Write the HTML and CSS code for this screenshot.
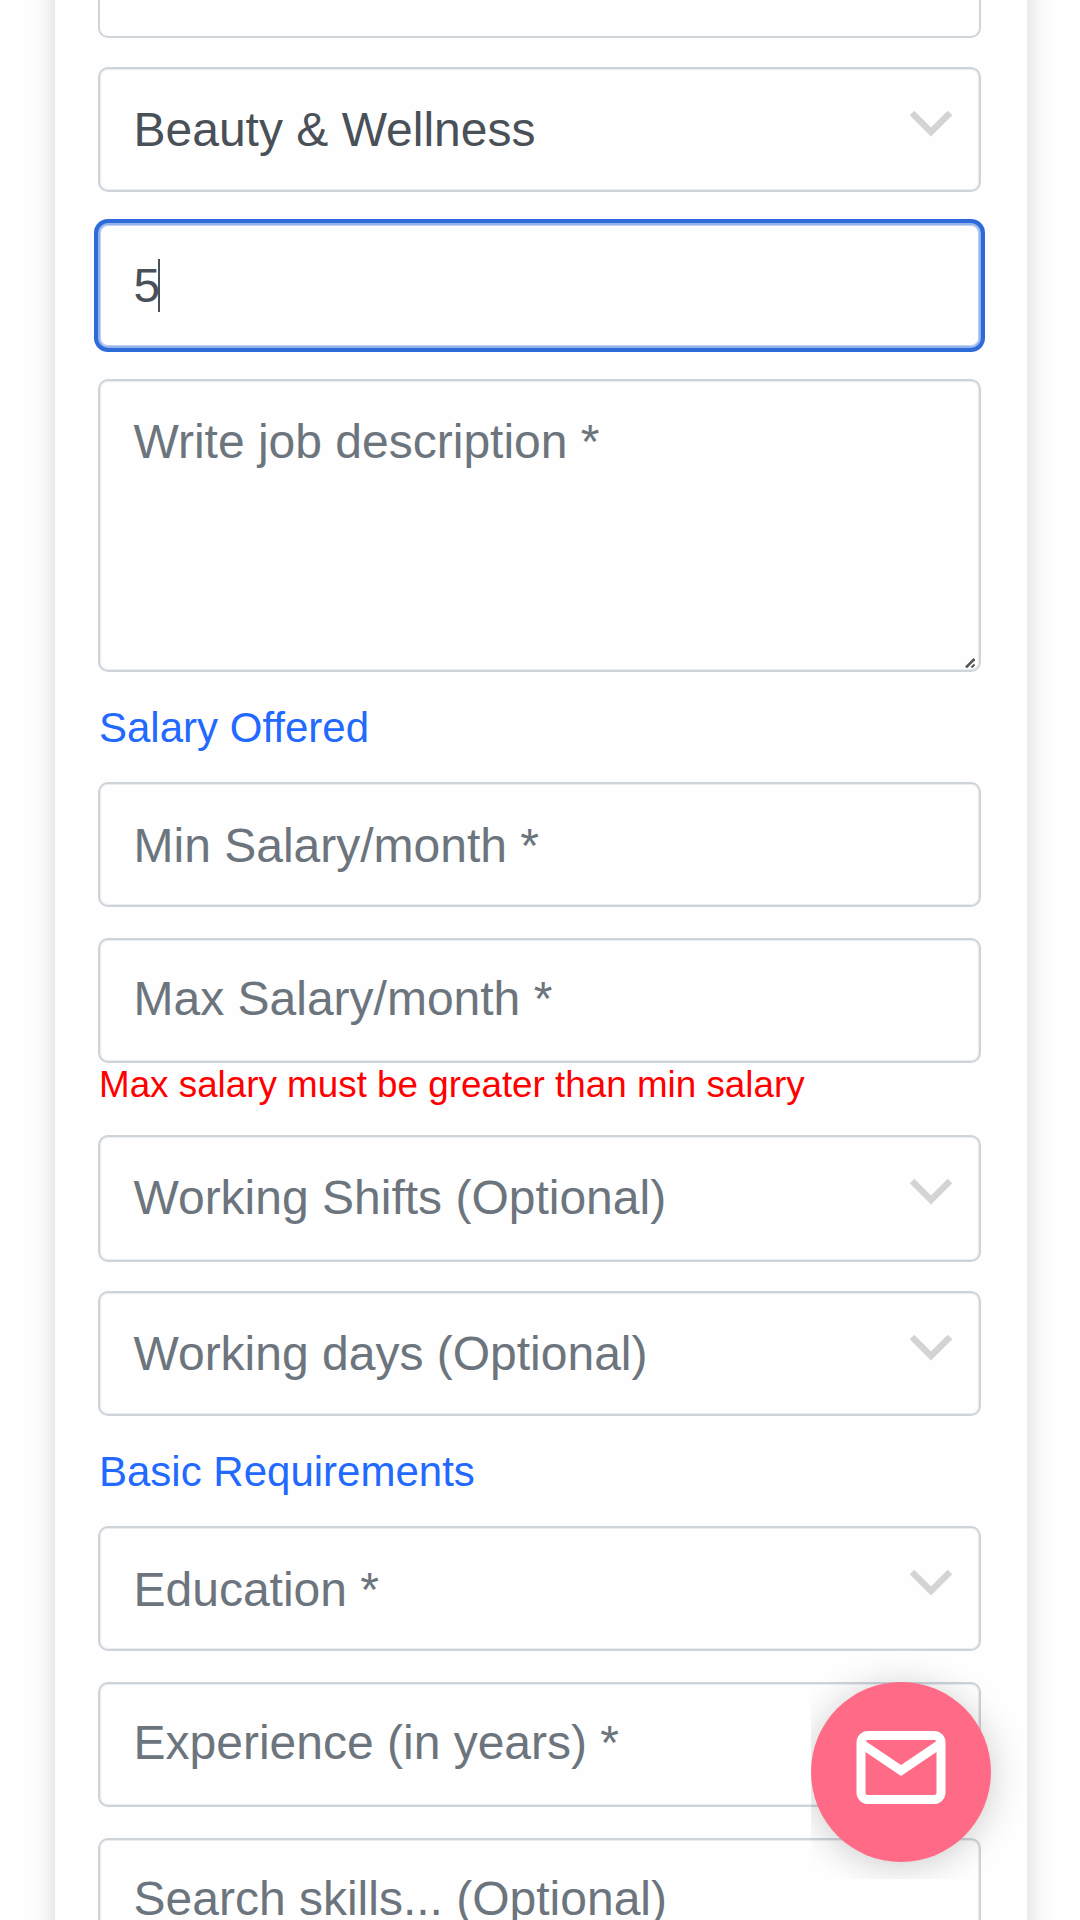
FILE: index.html
```html
<!DOCTYPE html>
<html lang="en">
<head>
<meta charset="utf-8">
<title>Post a job</title>
<link rel="stylesheet" href="styles.css">
</head>
<body>
<svg class="defs" width="0" height="0" aria-hidden="true">
  <symbol id="chevron" viewBox="0 0 44 28"><path d="M3 4 L22 23 L41 4" fill="none" stroke="#d4d4d4" stroke-width="6.4" stroke-linejoin="miter"/></symbol>
</svg>
<main class="card">
  <div class="field field-cut"></div>
  <div class="field filled"><span class="label">Beauty &amp; Wellness</span><svg class="chevron"><use href="#chevron"/></svg></div>
  <div class="field filled focused"><span class="label">5</span><span class="caret"></span></div>
  <div class="field area"><span class="label">Write job description *</span>
    <svg class="grip" viewBox="0 0 10 10"><path d="M1 9.500 L9.500 1" stroke="#555" stroke-width="2.600" fill="none"/><path d="M6.500 9.500 L9.500 6.500" stroke="#555" stroke-width="2" fill="none"/></svg>
  </div>
  <h2 class="heading">Salary Offered</h2>
  <div class="field lowered"><span class="label">Min Salary/month *</span></div>
  <div class="field raised"><span class="label">Max Salary/month *</span></div>
  <p class="error">Max salary must be greater than min salary</p>
  <div class="field tall"><span class="label">Working Shifts (Optional)</span><svg class="chevron"><use href="#chevron"/></svg></div>
  <div class="field last"><span class="label">Working days (Optional)</span><svg class="chevron"><use href="#chevron"/></svg></div>
  <h2 class="heading">Basic Requirements</h2>
  <div class="field lowered"><span class="label">Education *</span><svg class="chevron"><use href="#chevron"/></svg></div>
  <div class="field raised"><span class="label">Experience (in years) *</span></div>
  <div class="field raised"><span class="label">Search skills... (Optional)</span></div>
</main>
<div class="chat">
  <div class="bubble">
    <svg class="mail" viewBox="0 0 90 74"><rect x="5" y="4.500" width="80" height="64" rx="7" fill="none" stroke="#fff" stroke-width="9"/><path d="M5 12.500 L45 39.500 L85 12.500" fill="none" stroke="#fff" stroke-width="9"/></svg>
  </div>
</div>
</body>
</html>
```
FILE: styles.css
```css
* { box-sizing: border-box; }
html { height: 1920px; overflow: hidden; }
body {
  display: flow-root;
  height: 1920px;
  margin: 0;
  overflow: hidden;
  background: #fefefe;
  font-family: "Liberation Sans", Arial, sans-serif;
}
.defs { position: absolute; }
.card {
  width: 972px;
  height: 2040px;
  margin: -60px 0 0 55px;
  padding: 60px 46px 0 43px;
  background: #fefefe;
  box-shadow: 0 0 25px rgba(0, 0, 0, .16);
}
.field {
  position: relative;
  display: flex;
  justify-content: space-between;
  height: 125px;
  margin-bottom: 31px;
  padding: 33px 26px 0 33.5px;
  border: 2px solid #ced4da;
  border-radius: 10px;
  background: #fefefe;
  box-shadow: inset 0 0 0 1px rgba(206, 212, 218, .4);
  color: #6c757d;
  font-size: 48px;
  line-height: 56px;
  white-space: nowrap;
}
.field-cut {
  height: 38px;
  margin-bottom: 29px;
  border-top: 0;
  border-radius: 0 0 10px 10px;
  box-shadow: none;
}
.filled { color: #495057; }
.lowered { padding-top: 34px; }
.raised { padding-top: 31px; }
.tall { height: 127px; margin-bottom: 29px; }
.area { height: 293px; margin-bottom: 0; }
.last { margin-bottom: 0; }
.focused {
  justify-content: flex-start;
  border-color: #94b3ea;
  box-shadow: 0 0 0 4px #2d6bd9, inset 0 0 0 1px rgba(148, 179, 234, .6);
}
.caret { width: 2px; height: 53px; margin: 1px 0 0 -2px; background: #495057; }
.chevron { width: 44px; height: 28px; margin-top: 7px; }
.lowered .chevron { margin-top: 6px; }
.grip { position: absolute; right: 4px; bottom: 2px; width: 10px; height: 10px; }
.heading {
  height: 110px;
  margin: 0;
  padding: 32px 0 0 1px;
  color: #2269ff;
  font-size: 42px;
  font-weight: 400;
  line-height: 48px;
}
.error {
  height: 72px;
  margin: -31px 0 0;
  padding-left: 1px;
  color: #f00;
  font-size: 36.8px;
  line-height: 44px;
}
.chat {
  position: fixed;
  left: 811px;
  top: 1640px;
  width: 269px;
  height: 239px;
  padding-top: 42px;
  overflow: hidden;
}
.bubble {
  display: flex;
  align-items: center;
  justify-content: center;
  width: 180px;
  height: 180px;
  border-radius: 50%;
  background: #ff6b86;
  box-shadow: 0 4px 36px rgba(0, 0, 0, .2);
}
.mail { width: 90px; height: 74px; margin-top: -8px; }
```
